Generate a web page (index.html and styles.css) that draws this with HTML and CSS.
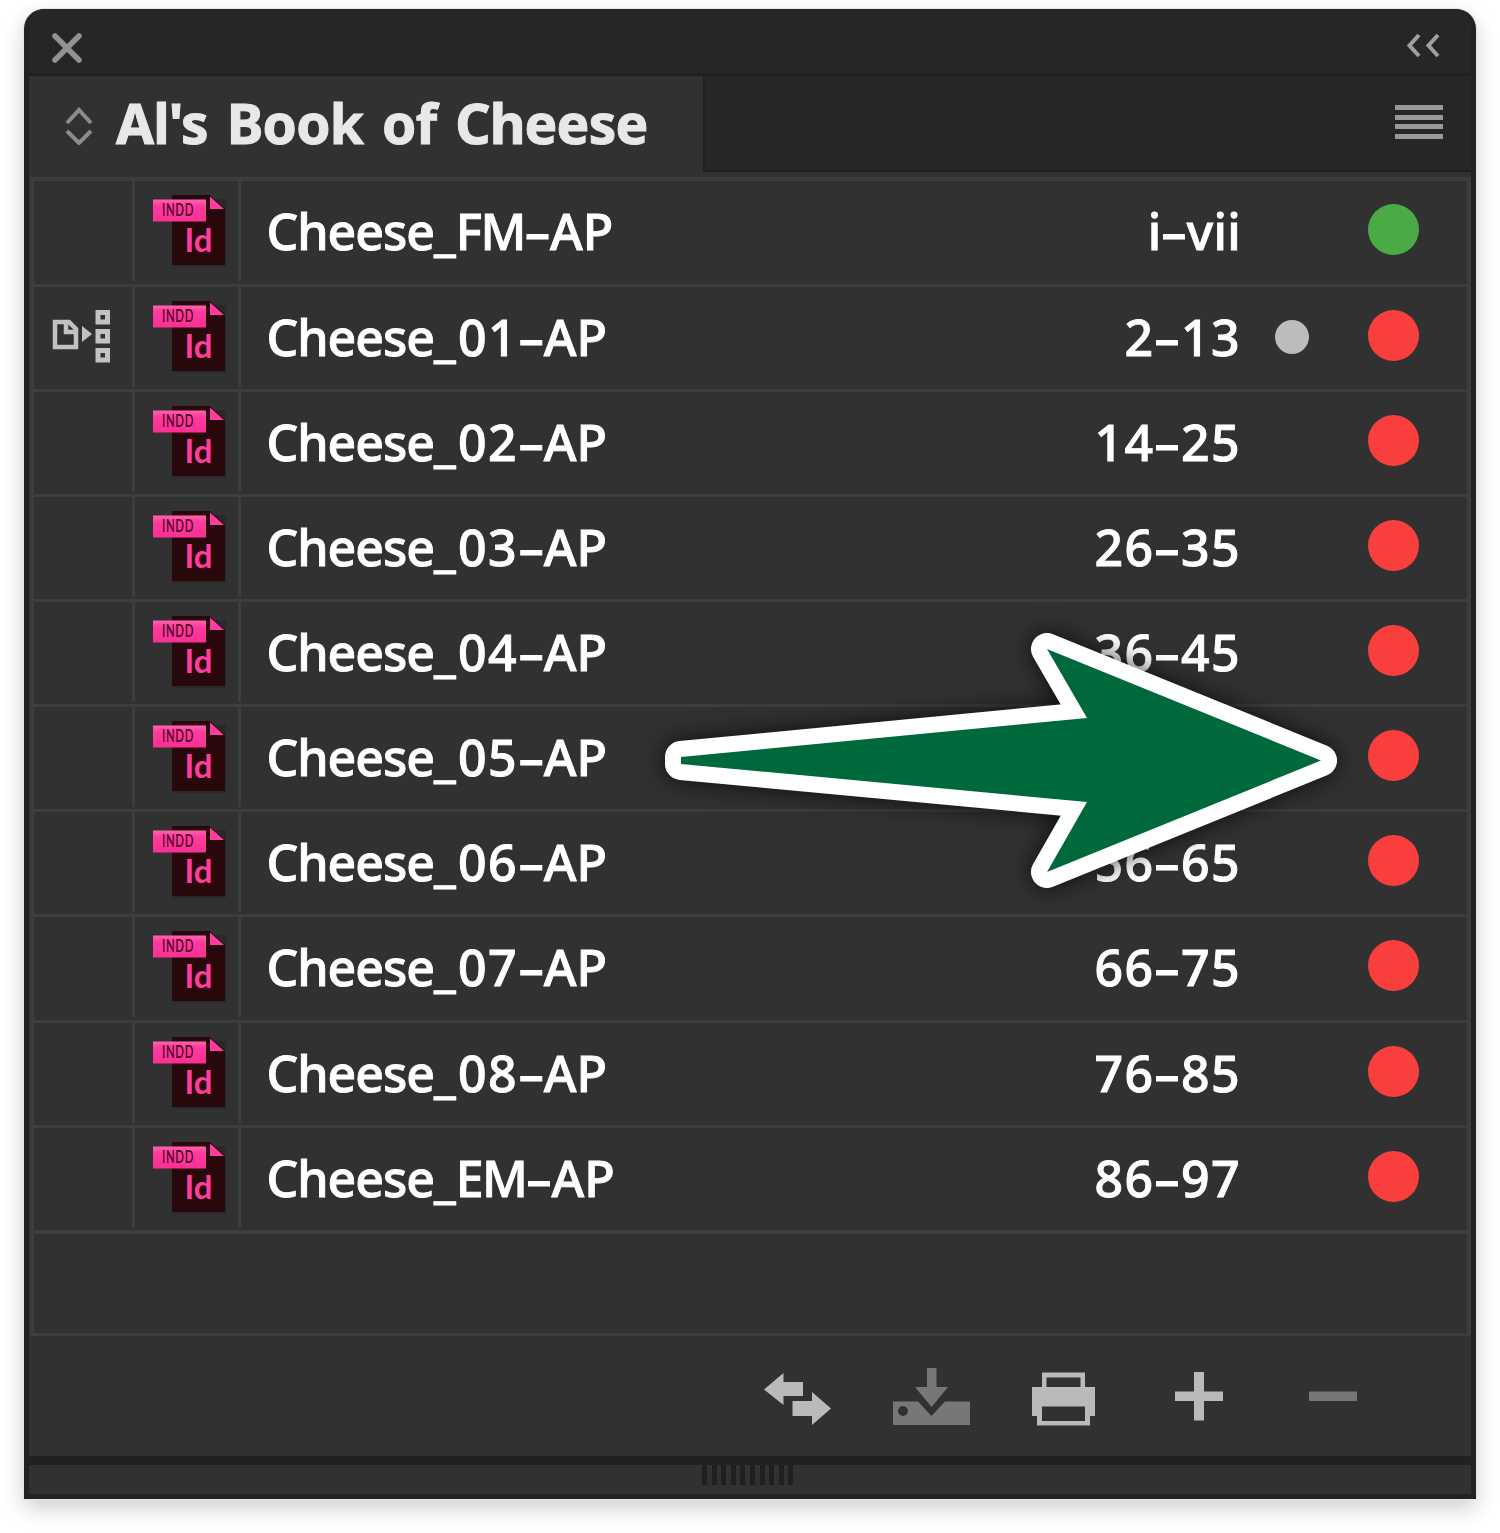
FILE: index.html
```html
<!DOCTYPE html>
<html lang="en">
<head>
<meta charset="utf-8">
<title>Al's Book of Cheese</title>
<link rel="stylesheet" href="styles.css">
</head>
<body>
<svg class="defs" width="0" height="0" aria-hidden="true">
  <defs>
    <linearGradient id="label-fill" x1="0" y1="0" x2="0" y2="1">
      <stop offset="0" stop-color="#ff63ae"/><stop offset=".3" stop-color="#ff3a9c"/><stop offset="1" stop-color="#fb2f94"/>
    </linearGradient>
    <symbol id="indd" viewBox="0 0 84 80">
      <path class="page-shadow" d="M25 8h53v68H25z"/>
      <path fill="#29080c" d="M24 4h38l15 14v56H24z"/>
      <path fill="#ff3d9e" d="M62 5.500l14 12.500H62z"/>
      <path fill="url(#label-fill)" d="M5 8.500h53v22H5z"/>
      <text class="indd-label" x="14" y="25" textLength="32" lengthAdjust="spacingAndGlyphs">INDD</text>
      <text class="indd-id" x="36.500" y="61" textLength="28" lengthAdjust="spacingAndGlyphs">Id</text>
    </symbol>
  </defs>
</svg>
<main class="panel">
  <header class="titlebar">
    <svg width="32" height="32" viewBox="0 0 32 32"><path d="M4 4l24 24M28 4L4 28" stroke="#929292" stroke-width="5.500" stroke-linecap="round"/></svg>
    <svg width="34" height="26" viewBox="0 0 34 26"><path d="M12 3L2.500 13.500 12 24M31 3L21.500 13.500 31 24" fill="none" stroke="#a0a0a0" stroke-width="4"/></svg>
  </header>
  <div class="tabs">
    <div class="tab">
      <svg width="28" height="42" viewBox="0 0 28 42"><path d="M2 20L14 7l12 13M2 28l12 12 12-12" fill="none" stroke="#8c8c8c" stroke-width="4"/></svg>
      <h1>Al's Book of Cheese</h1>
    </div>
    <div class="menu"><i></i><i></i><i></i><i></i></div>
  </div>
  <section class="list">
    <div class="row"><span class="source"></span><span class="file"><svg width="84" height="80"><use href="#indd"/></svg></span><span class="name"><span class="book">Cheese</span>_<span class="matter">FM</span>–AP</span><span class="pages roman">i–vii</span><span class="open"></span><span class="status ok"></span></div>
    <div class="row"><span class="source"><svg width="60" height="56" viewBox="0 0 60 56"><path d="M3 13h14l7 7v18H3zM14 13v10h10" fill="none" stroke="#c2c2c2" stroke-width="4.500"/><path d="M30 17l10 8-10 8z" fill="#c2c2c2"/><path d="M46 3.500h9.500V13H46zM46 22.500h9.500V32H46zM46 41.500h9.500V51H46z" fill="none" stroke="#c2c2c2" stroke-width="5"/></svg></span><span class="file"><svg width="84" height="80"><use href="#indd"/></svg></span><span class="name"><span class="book">Cheese</span>_<span class="num">01</span>–AP</span><span class="pages">2–13</span><span class="open"><b></b></span><span class="status"></span></div>
    <div class="row"><span class="source"></span><span class="file"><svg width="84" height="80"><use href="#indd"/></svg></span><span class="name"><span class="book">Cheese</span>_<span class="num">02</span>–AP</span><span class="pages">14–25</span><span class="open"></span><span class="status"></span></div>
    <div class="row"><span class="source"></span><span class="file"><svg width="84" height="80"><use href="#indd"/></svg></span><span class="name"><span class="book">Cheese</span>_<span class="num">03</span>–AP</span><span class="pages">26–35</span><span class="open"></span><span class="status"></span></div>
    <div class="row"><span class="source"></span><span class="file"><svg width="84" height="80"><use href="#indd"/></svg></span><span class="name"><span class="book">Cheese</span>_<span class="num">04</span>–AP</span><span class="pages">36–45</span><span class="open"></span><span class="status"></span></div>
    <div class="row"><span class="source"></span><span class="file"><svg width="84" height="80"><use href="#indd"/></svg></span><span class="name"><span class="book">Cheese</span>_<span class="num">05</span>–AP</span><span class="pages"></span><span class="open"></span><span class="status"></span></div>
    <div class="row"><span class="source"></span><span class="file"><svg width="84" height="80"><use href="#indd"/></svg></span><span class="name"><span class="book">Cheese</span>_<span class="num">06</span>–AP</span><span class="pages">56–65</span><span class="open"></span><span class="status"></span></div>
    <div class="row"><span class="source"></span><span class="file"><svg width="84" height="80"><use href="#indd"/></svg></span><span class="name"><span class="book">Cheese</span>_<span class="num">07</span>–AP</span><span class="pages">66–75</span><span class="open"></span><span class="status"></span></div>
    <div class="row"><span class="source"></span><span class="file"><svg width="84" height="80"><use href="#indd"/></svg></span><span class="name"><span class="book">Cheese</span>_<span class="num">08</span>–AP</span><span class="pages">76–85</span><span class="open"></span><span class="status"></span></div>
    <div class="row"><span class="source"></span><span class="file"><svg width="84" height="80"><use href="#indd"/></svg></span><span class="name"><span class="book">Cheese</span>_<span class="matter">EM</span>–AP</span><span class="pages">86–97</span><span class="open"></span><span class="status"></span></div>
  </section>
  <footer class="tools">
    <svg width="68" height="60" viewBox="0 0 68 60"><path fill="#bababa" d="M1 22.500L20.500 6v9H40v14H20.500v9zM29.500 34H49v-9l19 16.500L49 58v-9H29.500z"/></svg>
    <svg width="77" height="60" viewBox="0 0 77 60"><path fill="#777" d="M34 1h9.500v19H55L38.500 40 22 20h12z"/><path fill="#777" fill-rule="evenodd" d="M0 34.500h25L38.500 49 52 34.500h25V58H0zM10 39a5 5 0 100 10 5 5 0 000-10z"/></svg>
    <svg width="63" height="60" viewBox="0 0 63 60"><path fill="#bababa" fill-rule="evenodd" d="M10 5.500h43V20h10v29h-5v9.500H5V49H0V20h10zM14.500 10.500V20h34v-9.500zM10 39.500V54h43V39.500z"/></svg>
    <svg width="48" height="60" viewBox="0 0 48 60"><path fill="#bababa" d="M19 5h10v19.500h19V34H29v19.500H19V34H0v-9.500h19z"/></svg>
    <svg width="48" height="60" viewBox="0 0 48 60"><path fill="#777" d="M0 24.500h48V34H0z"/></svg>
  </footer>
  <div class="resize"><div class="grip"></div></div>
</main>
<svg class="arrow" width="720" height="310" viewBox="640 605 720 310">
  <path d="M681 757L1087 718 1047 649 1321 760.500 1047 872 1087 802 681 764z" fill="#fff" stroke="#fff" stroke-width="32" stroke-linejoin="round"/>
  <path d="M681 757L1087 718 1047 649 1321 760.500 1047 872 1087 802 681 764z" fill="#00693c"/>
</svg>
</body>
</html>
```
FILE: styles.css
```css
* { box-sizing: border-box; }
html { background: #fff; }
body { margin: 0; min-height: 1533px; padding: 9px 0 0 24px; font-family: "Noto Sans", "Open Sans", sans-serif; }
svg { display: block; flex: none; }
.defs { position: absolute; }

.panel {
  width: 1452px; height: 1490px;
  display: flex; flex-direction: column;
  background: #313131; border: 5px solid #222; border-top-width: 0;
  border-radius: 20px 20px 0 0; overflow: hidden;
  box-shadow: 0 0 0 1px #e4e4e4, 0 9px 22px rgba(0, 0, 0, .2);
}
.titlebar {
  height: 67px; flex: none; display: flex; justify-content: space-between;
  padding: 23px 30px 0 22px; background: #262626; border-bottom: 3px solid #202020;
}
.tabs { height: 96px; flex: none; display: flex; }
.tab { width: 674px; display: flex; align-items: center; gap: 23px; padding-left: 36px; }
h1 {
  margin: 0; padding-bottom: 3px; font-size: 55px; line-height: 93px; font-weight: 700; color: #e8e8e8; white-space: nowrap;
  letter-spacing: -.8px; word-spacing: 5.500px; -webkit-text-stroke: 1px #e8e8e8;
}
.menu {
  flex: 1; display: flex; flex-direction: column; align-items: flex-end; gap: 4.500px;
  padding: 29px 28px 0 0; background: #262626; border: 2px solid #202020; border-top: 0; border-right: 0;
}
.menu i { width: 48px; height: 5px; background: #999; }

.list { margin: 5.400px 0 0 1px; width: 1441px; height: 1159px; flex: none; border: 4px solid #3d3d3d; border-bottom-width: 3px; }
.row {
  height: 105.150px; display: grid; grid-template-columns: 101px 106px 640px 360px 101px 1fr;
  border-bottom: 3px solid #3d3d3d; color: #fff; font-size: 50px; font-weight: 500; line-height: 101px; white-space: nowrap;
  -webkit-text-stroke: .9px #fff;
}
.row:last-child { height: 106px; border-bottom-width: 4px; }
.source, .file { border-right: 3px solid #3d3d3d; height: 100px; }
.source { padding: 22px 0 0 18px; }
.file { padding: 10px 0 0 13px; }
.name { padding-left: 25.500px; }
.book { letter-spacing: -1px; }
.matter { letter-spacing: -1.500px; }
.num { letter-spacing: 1.300px; margin: 0 1px 0 2.300px; }
.pages { text-align: right; letter-spacing: 1.400px; }
.pages.roman { letter-spacing: .3px; }
.open { padding: 33px 0 0 34px; }
.open b { display: block; width: 34px; height: 34px; border-radius: 50%; background: #bcbcbc; }
.status { width: 51px; height: 51px; margin: 23px 0 0 26px; border-radius: 50%; background: #f93f3e; }
.status.ok { background: #49aa46; }

.indd-label, .indd-id { -webkit-text-stroke: 0; }
.indd-label { font: 600 17px Lato, sans-serif; letter-spacing: 1px; fill: #4b0826; }
.indd-id { font: 700 32px Lato, sans-serif; fill: #ff3d9e; }
.page-shadow { fill: #1c1c1c; opacity: .35; }

.tools { flex: 1; display: flex; padding: 30.500px 114px 0 0; justify-content: flex-end; }
.tools svg:nth-child(2) { margin-left: 62px; }
.tools svg:nth-child(3) { margin-left: 62px; }
.tools svg:nth-child(4) { margin-left: 80px; }
.tools svg:nth-child(5) { margin-left: 86px; }
.resize { height: 38px; flex: none; border-top: 9px solid #212121; display: flex; justify-content: center; }
.grip { width: 92px; height: 20px; margin-right: 4px; background: repeating-linear-gradient(90deg, #1f1f1f 0 5px, #313131 5px 9.600px); }
.arrow { position: absolute; left: 640px; top: 605px; filter: drop-shadow(0 0 12px rgba(0, 0, 0, .75)); }
```
